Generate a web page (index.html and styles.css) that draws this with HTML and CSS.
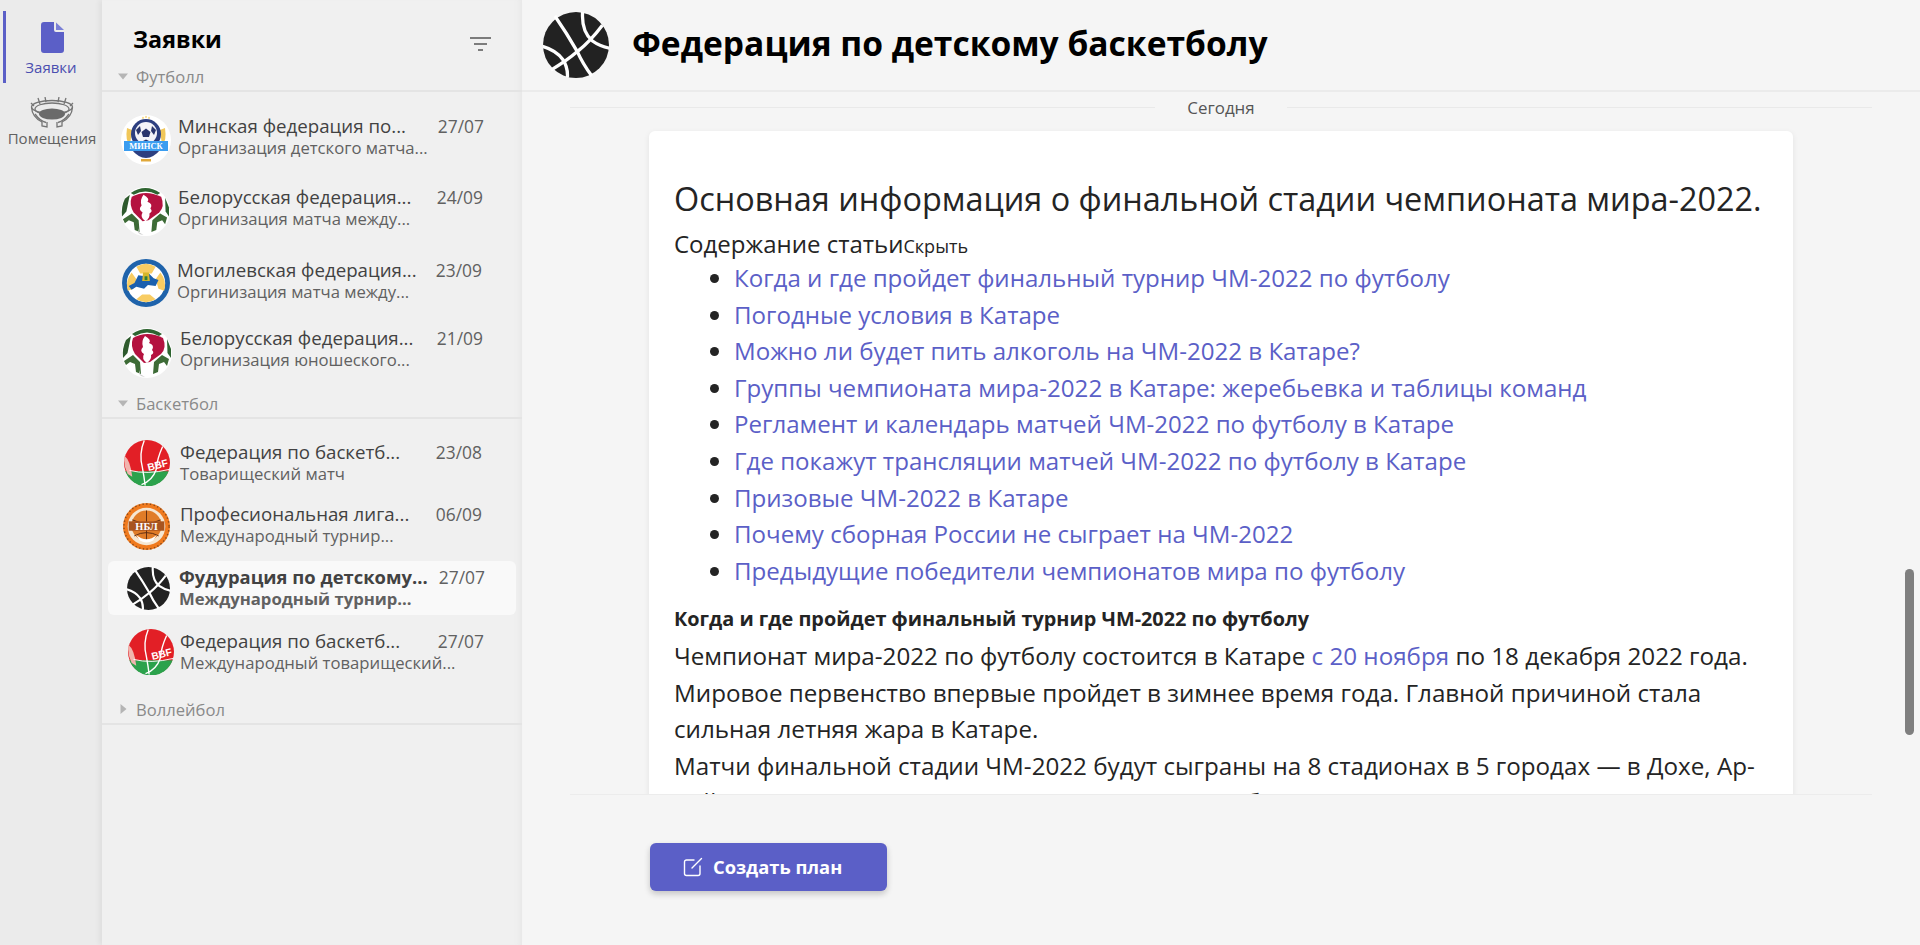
FILE: index.html
```html
<!DOCTYPE html>
<html lang="ru">
<head>
<meta charset="utf-8">
<title>Заявки</title>
<link rel="stylesheet" href="styles.css">
</head>
<body>
<svg class="defs" width="0" height="0" aria-hidden="true">
  <defs>
    <symbol id="logo-minsk" viewBox="0 0 100 100">
      <circle cx="50" cy="50" r="50" fill="#fff"/>
      <path d="M12 26 Q8 52 18 60 L22 30Z M88 26 Q92 52 82 60 L78 30Z" fill="#f1c75a"/>
      <circle cx="50" cy="38" r="30" fill="#2d3f80"/>
      <circle cx="50" cy="36" r="22" fill="#f4f4f8"/>
      <path d="M50 27l9 7-3 10H44l-3-10zM30 30l8-8 2 10-6 8zM70 30l-8-8-2 10 6 8zM42 53l8-4 8 4-8 4z" fill="#29356c"/>
      <path d="M20 68 Q50 104 80 68Z" fill="#2d3f80"/>
      <path d="M40 88h20v5H40z" fill="#e0a83a"/>
      <path d="M44 3l2 4h-4zM56 3l2 4h-4zM50 1l2 4h-4z" fill="#f2c23a"/>
      <rect x="6" y="52" width="88" height="20" fill="#3b9df0"/>
      <text x="50" y="67" class="logo-text logo-minsk-t">МИНСК</text>
    </symbol>
    <symbol id="logo-bel" viewBox="0 0 100 100">
      <circle cx="50" cy="50" r="50" fill="#fff"/>
      <path d="M20 12 Q50 -8 80 12 L74 16 Q50 2 26 16Z" fill="#2e6430"/>
      <path d="M8 24 L18 16 L11 50 L2 60 Q0 40 8 24Z" fill="#2e5a2d"/>
      <path d="M90 22 L98 42 L98 60 L91 50 Z" fill="#2e6430"/>
      <path d="M4 66 L22 54 L36 68 L38 92 L28 88 L26 72 L16 68 L8 74Z" fill="#3d6b36"/>
      <path d="M94 62 L80 54 L64 68 L62 92 L72 88 L74 72 L84 68 L90 76Z" fill="#3d6b36"/>
      <path d="M36 84 Q30 96 46 98 L36 92Z" fill="#ccc"/>
      <path d="M22 20 Q50 4 82 20 Q90 40 78 52 L56 68 L44 70 L26 52 Q16 36 22 20Z" fill="#b4123f"/>
      <path d="M46 16 Q60 24 54 30 Q66 34 60 44 Q66 50 58 54 Q60 62 50 70 Q38 62 44 52 Q34 46 42 38 Q38 26 46 16Z" fill="#fff"/>
    </symbol>
    <symbol id="logo-mog" viewBox="0 0 100 100">
      <circle cx="50" cy="50" r="50" fill="#1f63ab"/>
      <circle cx="50" cy="50" r="40" fill="#fff"/>
      <path d="M30 16 Q50 4 70 16 L62 30 H38Z M80 28 Q94 46 88 66 L76 62 L70 42Z M20 28 Q6 46 12 66 L24 62 L30 42Z M30 84 L42 74 H58 L70 84 Q50 96 30 84Z" fill="#f8cc62"/>
      <path d="M14 56 L26 50 L34 34 L48 36 L56 30 L66 40 L76 44 L70 56 L54 54 L46 62 L30 58 L20 64Z" fill="#1b60ae"/>
      <path d="M44 28 L56 28 L58 46 H42Z" fill="#d7b62a"/>
      <path d="M47 36h6v8h-6z" fill="#2d7f3c"/>
    </symbol>
    <symbol id="logo-bbf" viewBox="0 0 100 100">
      <circle cx="50" cy="50" r="50" fill="#e21f26"/>
      <path d="M3 68 H97 A50 50 0 0 1 3 68Z" fill="#2ba24c"/>
      <path d="M1 34 Q14 44 18 80 L8 74 Q-2 54 1 34Z" fill="#f1b4ae"/>
      <path d="M44 1 Q32 30 40 60 Q44 82 46 99 M84 14 Q72 40 70 64 Q62 88 38 97" fill="none" stroke="#fff" stroke-width="3"/>
      <path d="M12 66 Q50 76 98 64" fill="none" stroke="#fff" stroke-width="2"/>
      <text x="75" y="62" class="logo-text logo-bbf-t" transform="rotate(-14 75 62)">BBF</text>
    </symbol>
    <symbol id="logo-nbl" viewBox="0 0 100 100">
      <circle cx="50" cy="50" r="50" fill="#f07a1e"/>
      <circle cx="50" cy="50" r="48" fill="none" stroke="#8a4a1a" stroke-width="3" stroke-dasharray="3 5"/>
      <circle cx="50" cy="50" r="40" fill="#f5e6d2"/>
      <circle cx="50" cy="48" r="32" fill="#e07c28"/>
      <path d="M50 16 V80 M20 36 Q50 50 80 36 M24 70 Q50 56 76 70" fill="none" stroke="#5c2b12" stroke-width="2"/>
      <rect x="12" y="39" width="76" height="20" fill="#a8541f"/>
      <text x="50" y="57" class="logo-text logo-nbl-t">НБЛ</text>
      <path d="M28 68 Q50 86 72 68 L64 80 Q50 88 36 80Z" fill="#fff"/>
    </symbol>
    <symbol id="logo-ball" viewBox="0 0 100 100">
      <circle cx="50" cy="50" r="50" fill="#222"/>
      <g fill="none" stroke="#fff" stroke-width="5">
        <path d="M18 6 Q36 32 52 60 Q60 78 74 97"/>
        <path d="M90 20 Q72 44 52 60 Q36 74 12 88"/>
        <path d="M60 0 Q58 30 75 44 Q86 52 101 55"/>
        <path d="M-1 52 Q20 58 30 72 Q38 84 37 99"/>
      </g>
    </symbol>
  </defs>
</svg>

<div class="app">
  <nav class="rail">
    <a class="rail-item is-active">
      <svg class="ic-doc" viewBox="0 0 23 31"><path d="M3 0H13V8a2 2 0 0 0 2 2H23V28a3 3 0 0 1-3 3H3a3 3 0 0 1-3-3V3a3 3 0 0 1 3-3Z" fill="#5b5fc7"/><path d="M15 .5 L23 8 H15Z" fill="#7b80d6"/></svg>
      <span class="rail-label">Заявки</span>
    </a>
    <a class="rail-item">
      <svg class="ic-stadium" viewBox="0 0 44 31">
        <g fill="none" stroke="#757575" stroke-width="1.300">
          <ellipse cx="22" cy="10" rx="20.500" ry="6.500"/>
          <ellipse cx="22" cy="12" rx="17" ry="6"/>
          <path d="M1.500 10 Q2 20 12 25 M42.500 10 Q42 20 32 25"/>
          <path d="M5 17 Q10 24 16 25.500 M39 17 Q34 24 28 25.500"/>
          <path d="M12 25 L12 29 L17 30 L17 25 M32 25 L32 29 L27 30 L27 25"/>
          <path d="M8 1 L10 7 M15 0 L16 5 M29 0 L28 5 M36 1 L34 7 M1 6 L4 9 M43 6 L40 9"/>
        </g>
        <ellipse cx="22" cy="17" rx="13" ry="5.500" fill="#6a6a6a"/>
      </svg>
      <span class="rail-label">Помещения</span>
    </a>
  </nav>

  <aside class="panel">
    <div class="panel-head">
      <h2 class="panel-title">Заявки</h2>
      <svg class="ic-filter" viewBox="0 0 21 14"><path d="M0 1h21M4 7h13M8 13h5" fill="none" stroke="#555" stroke-width="1.400"/></svg>
    </div>

    <div class="group"><span class="tri tri-down"></span>Футболл</div>
    <div class="rows rows-first">
      <div class="row r1"><svg class="av"><use href="#logo-minsk"/></svg><div class="txt"><div class="line"><span class="ttl">Минская федерация по...</span><span class="date">27/07</span></div><div class="sub">Организация детского матча...</div></div></div>
      <div class="row r2"><svg class="av"><use href="#logo-bel"/></svg><div class="txt"><div class="line"><span class="ttl">Белорусская федерация...</span><span class="date">24/09</span></div><div class="sub">Оргинизация матча между...</div></div></div>
      <div class="row r3"><svg class="av"><use href="#logo-mog"/></svg><div class="txt"><div class="line"><span class="ttl">Могилевская федерация...</span><span class="date">23/09</span></div><div class="sub">Оргинизация матча между...</div></div></div>
      <div class="row r4"><svg class="av"><use href="#logo-bel"/></svg><div class="txt"><div class="line"><span class="ttl">Белорусская федерация...</span><span class="date">21/09</span></div><div class="sub">Оргинизация юношеского...</div></div></div>
    </div>

    <div class="group group-gap"><span class="tri tri-down"></span>Баскетбол</div>
    <div class="rows rows-second">
      <div class="row r5"><svg class="av"><use href="#logo-bbf"/></svg><div class="txt"><div class="line"><span class="ttl">Федерация по баскетб...</span><span class="date">23/08</span></div><div class="sub">Товарищеский матч</div></div></div>
      <div class="row r6"><svg class="av"><use href="#logo-nbl"/></svg><div class="txt"><div class="line"><span class="ttl">Професиональная лига...</span><span class="date">06/09</span></div><div class="sub">Международный турнир...</div></div></div>
      <div class="row r7 is-selected"><svg class="av"><use href="#logo-ball"/></svg><div class="txt"><div class="line"><span class="ttl">Фудурация по детскому...</span><span class="date">27/07</span></div><div class="sub">Международный турнир...</div></div></div>
      <div class="row r8"><svg class="av"><use href="#logo-bbf"/></svg><div class="txt"><div class="line"><span class="ttl">Федерация по баскетб...</span><span class="date">27/07</span></div><div class="sub">Международный товарищеский...</div></div></div>
    </div>

    <div class="group group-gap-2"><span class="tri tri-right"></span>Воллейбол</div>
  </aside>

  <main class="main">
    <header class="main-head">
      <svg class="main-av"><use href="#logo-ball"/></svg>
      <h1 class="main-title">Федерация по детскому баскетболу</h1>
    </header>
    <section class="feed">
      <div class="day"><span class="day-line"></span><span class="day-text">Сегодня</span><span class="day-line"></span></div>
      <article class="card">
        <h2 class="card-h">Основная информация о финальной стадии чемпионата мира-2022.</h2>
        <div class="toc-head">Содержание статьи<small class="toc-hide">Скрыть</small></div>
        <ul class="toc">
          <li><a class="lnk">Когда и где пройдет финальный турнир ЧМ-2022 по футболу</a></li>
          <li><a class="lnk">Погодные условия в Катаре</a></li>
          <li><a class="lnk">Можно ли будет пить алкоголь на ЧМ-2022 в Катаре?</a></li>
          <li><a class="lnk">Группы чемпионата мира-2022 в Катаре: жеребьевка и таблицы команд</a></li>
          <li><a class="lnk">Регламент и календарь матчей ЧМ-2022 по футболу в Катаре</a></li>
          <li><a class="lnk">Где покажут трансляции матчей ЧМ-2022 по футболу в Катаре</a></li>
          <li><a class="lnk">Призовые ЧМ-2022 в Катаре</a></li>
          <li><a class="lnk">Почему сборная России не сыграет на ЧМ-2022</a></li>
          <li><a class="lnk">Предыдущие победители чемпионатов мира по футболу</a></li>
        </ul>
        <h3 class="sec-h">Когда и где пройдет финальный турнир ЧМ-2022 по футболу</h3>
        <p class="para">Чемпионат мира-2022 по футболу состоится в Катаре <a class="lnk">с 20 ноября</a> по 18 декабря 2022 года. Мировое первенство впервые пройдет в зимнее время года. Главной причиной стала сильная летняя жара в Катаре.</p>
        <p class="para">Матчи финальной стадии ЧМ-2022 будут сыграны на 8 стадионах в 5 городах — в Дохе, Ар-Райяне, Лусаиле, Аль-Хауре, Аль-Вакре. Все они были построены или реконструированы к 2021 году.</p>
      </article>
    </section>
    <footer class="actions">
      <button class="btn">
        <svg class="ic-note" viewBox="0 0 20 20"><path d="M11 3H3.500A2 2 0 0 0 1.500 5v11.500A2 2 0 0 0 3.500 18.500H15a2 2 0 0 0 2-2V9M9 11 L18.500 1.500" fill="none" stroke="#fff" stroke-width="1.400" stroke-linecap="round"/></svg>
        Создать план
      </button>
    </footer>
    <div class="scroll-thumb"></div>
  </main>
</div>
</body>
</html>
```

FILE: styles.css
```css
* { box-sizing: border-box; }
html, body { margin: 0; height: 100%; overflow: hidden; }
body { font-family: "Open Sans", "Noto Sans", sans-serif; color: #242424; background: #f5f5f5; }
.defs { position: absolute; }
.app { display: flex; height: 945px; }

/* left rail */
.rail { width: 102px; flex: none; background: #ebebeb; padding-top: 11px; display: flex; flex-direction: column; align-items: stretch; }
.rail-item { display: flex; flex-direction: column; align-items: center; color: #616161; }
.rail-item.is-active { height: 72px; padding-top: 11px; margin-left: 3px; border-left: 3px solid #5b5fc7; color: #4b4fb0; }
.rail-item.is-active .rail-label { margin-right: 6px; margin-top: 4px; }
.ic-doc { width: 23px; height: 31px; margin-right: 3px; flex: none; }
.ic-stadium { width: 44px; height: 31px; margin-top: 14px; margin-right: -2px; flex: none; }
.rail-label { font-size: 15px; line-height: 20px; white-space: nowrap; }
.rail-item:not(.is-active) .rail-label { margin-top: 0; margin-right: -2px; }

/* list panel */
.panel { width: 420px; flex: none; background: #f0f0f0; box-shadow: inset -7px 0 6px -5px #e6e6e6, -3px 0 5px rgba(0,0,0,.05); }
.panel-head { height: 64px; display: flex; align-items: flex-start; justify-content: space-between; padding: 23px 31px 0 31px; }
.panel-title { margin: 0; font-size: 23.3px; line-height: 33px; font-weight: 700; color: #000; }
.ic-filter { width: 21px; height: 14px; margin-top: 14px; }
.group { height: 28px; display: flex; align-items: center; gap: 8px; padding: 0 0 2px 16px; font-size: 16.6px; color: #8a8a8a; border-bottom: 2px solid #e4e4e4; }
.group-gap { margin-top: 4px; }
.group-gap-2 { margin-top: 9px; }
.tri { width: 10px; height: 10px; flex: none; background: #b5b5b5; }
.tri-down { clip-path: polygon(0 25%, 100% 25%, 50% 85%); }
.tri-right { clip-path: polygon(25% 0, 85% 50%, 25% 100%); }
.rows-first { padding-top: 12px; }
.rows-second { padding-top: 14px; }

.row { height: var(--h); padding-left: var(--pl); display: flex; align-items: center; }
.av { width: var(--av); height: var(--av); flex: none; }
.txt { margin-left: var(--g); width: var(--w); margin-top: var(--dy); }
.line { display: flex; justify-content: space-between; align-items: baseline; height: 24px; }
.ttl { font-size: 18.7px; line-height: 24px; color: #424242; white-space: nowrap; }
.date { font-size: 17.4px; line-height: 24px; color: #616161; white-space: nowrap; }
.sub { font-size: 16.7px; line-height: 22px; margin-top: -1px; color: #616161; white-space: nowrap; }

.r1 { --h: 72px; --pl: 19px; --av: 50px; --g: 7px; --w: 306px; --dy: -7.6px; }
.r2 { --h: 71px; --pl: 19px; --av: 49px; --g: 8px; --w: 305px; --dy: -8.6px; }
.r3 { --h: 71px; --pl: 20px; --av: 48px; --g: 7px; --w: 305px; --dy: -4.6px; }
.r4 { --h: 69px; --pl: 20px; --av: 50px; --g: 8px; --w: 303px; --dy: -8px; }
.r5 { --h: 59px; --pl: 22px; --av: 46px; --g: 10px; --w: 302px; --dy: .6px; }
.r6 { --h: 69px; --pl: 21px; --av: 47px; --g: 10px; --w: 302px; --dy: -5px; }
.r7 { --h: 54px; --pl: 19px; --av: 43px; --g: 9px; --w: 306px; --dy: -1.6px; }
.r8 { --h: 73px; --pl: 26px; --av: 46px; --g: 6px; --w: 304px; --dy: -.6px; }

.is-selected { margin: 0 6px; background: #f9f9f9; border-radius: 6px; }
.is-selected .ttl { font-weight: 700; font-size: 18.4px; }
.is-selected .sub { font-weight: 700; }

/* main */
.main { flex: 1; min-width: 0; display: flex; flex-direction: column; position: relative; }
.main-head { height: 92px; flex: none; display: flex; align-items: center; gap: 23px; padding: 0 0 0 21px; border-bottom: 2px solid #ebebeb; }
.main-av { width: 66px; height: 66px; flex: none; }
.main-title { margin: 0 0 4px; font-size: 33.6px; line-height: 44px; font-weight: 700; color: #000; white-space: nowrap; }
.feed { height: 703px; flex: none; margin: 0 48px; overflow: hidden; border-bottom: 1px solid #ececec; }
.day { height: 30px; display: flex; align-items: center; gap: 32px; }
.day-line { flex: 1; height: 1px; background: #e9e9e9; }
.day-text { font-size: 16.9px; color: #555; }
.card { margin: 9px 0 0 79px; width: 1144px; padding: 45px 25px 40px; background: #fff; border-radius: 6px; box-shadow: 0 2px 6px rgba(0,0,0,.08); }
.card-h { margin: 0 0 10px; font-size: 32.4px; line-height: 44px; font-weight: 400; white-space: nowrap; }
.toc-head { font-size: 24px; line-height: 28px; }
.toc-hide { font-size: 18px; }
.toc { margin: 0; padding: 0 0 0 60px; font-size: 24.1px; line-height: 36.6px; }
.lnk { color: #5b5fc7; }
.sec-h { margin: 11.6px 0 1px; font-size: 19.85px; line-height: 36px; font-weight: 700; }
.para { margin: 0; font-size: 24.2px; line-height: 36.6px; }
.actions { flex: 1; padding: 48px 0 0 128px; }
.btn { width: 237px; height: 48px; border: 0; border-radius: 6px; background: #5b5fc7; color: #fff; font: 700 18.3px/24px "Open Sans", sans-serif; display: flex; align-items: center; padding: 0 0 0 33px; gap: 10px; box-shadow: 0 3px 6px rgba(0,0,0,.2); }
.ic-note { width: 20px; height: 20px; flex: none; }
.scroll-thumb { position: absolute; right: 6px; top: 569px; width: 9px; height: 166px; border-radius: 5px; background: #7f7f7f; }

.logo-text { font-family: "Liberation Serif", serif; font-weight: 700; fill: #fff; text-anchor: middle; }
.logo-minsk-t { font-size: 17px; }
.logo-bbf-t { font-size: 22px; font-family: "Liberation Sans", sans-serif; }
.logo-nbl-t { font-size: 22px; }
```
